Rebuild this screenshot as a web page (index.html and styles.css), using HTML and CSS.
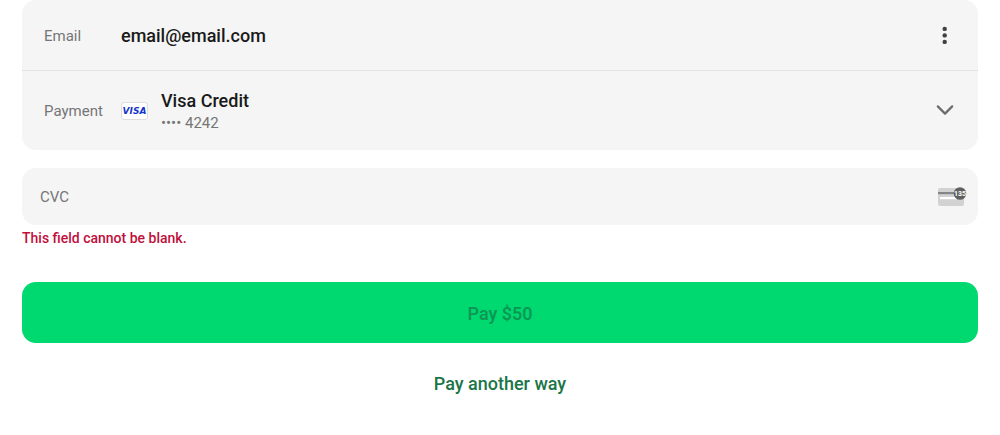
FILE: index.html
```html
<!DOCTYPE html>
<html lang="en">
<head>
<meta charset="utf-8">
<meta name="viewport" content="width=device-width, initial-scale=1">
<title>Payment</title>
<link rel="stylesheet" href="styles.css">
</head>
<body>
<form class="checkout">
  <section class="summary">
    <div class="row">
      <span class="row-label">Email</span>
      <span class="row-value">email@email.com</span>
      <button class="icon-button" type="button" aria-label="More options">
        <svg width="20" height="20" viewBox="0 0 20 20" fill="#414141">
          <circle cx="9.7" cy="2.9" r="2.2"/><circle cx="9.7" cy="9.4" r="2.2"/><circle cx="9.7" cy="15.9" r="2.2"/>
        </svg>
      </button>
    </div>
    <div class="row row-payment">
      <span class="row-label">Payment</span>
      <span class="brand">VISA</span>
      <div class="method">
        <span class="row-value">Visa Credit</span>
        <span class="digits">•••• 4242</span>
      </div>
      <button class="icon-button" type="button" aria-label="Change payment method">
        <svg width="20" height="20" viewBox="0 0 20 20" fill="none" stroke="#6b6b6b" stroke-width="2.2" stroke-linecap="round" stroke-linejoin="round">
          <path d="M2.8 5.4 10 12.6 17.2 5.4"/>
        </svg>
      </button>
    </div>
  </section>

  <div class="field">
    <input class="field-input" id="cvc" type="text" inputmode="numeric" placeholder="CVC" aria-label="CVC" aria-describedby="cvc-error">
    <svg class="cvc-icon" width="30" height="20" viewBox="0 0 30 20" aria-hidden="true">
      <rect x="1" y="1" width="26" height="18" rx="2" fill="#d2d2d2"/>
      <rect x="1" y="5" width="26" height="2.2" fill="#858585"/>
      <rect x="3" y="10" width="22" height="2.2" fill="#fff"/>
      <circle cx="23" cy="6.5" r="6.3" fill="#606060"/>
      <text class="cvc-digits" x="23" y="9" text-anchor="middle">135</text>
    </svg>
  </div>
  <p class="error" id="cvc-error">This field cannot be blank.</p>

  <button class="pay" type="submit" disabled>Pay $50</button>
  <a class="alternative" href="#">Pay another way</a>
</form>
</body>
</html>
```

FILE: styles.css
```css
* {
  box-sizing: border-box;
}

body {
  margin: 0;
  background: #fff;
  color: #1a1a1a;
  font-family: Roboto, "Liberation Sans", sans-serif;
}

.checkout {
  display: flex;
  flex-direction: column;
  padding: 0 22px 40px;
}

.summary {
  border-radius: 14px;
  background: #f5f5f5;
}

.row {
  display: flex;
  align-items: center;
  min-height: 70px;
  padding: 2px 23px 0 22px;
}

.row-payment {
  min-height: 80px;
  padding-top: 0;
  border-top: 1px solid #e3e3e3;
}

.row-label {
  flex: 0 0 77px;
  color: #757575;
  font-size: 15px;
  line-height: 20px;
}

.row-value {
  font-size: 18px;
  font-weight: 500;
  line-height: 22px;
}

.brand {
  width: 27px;
  margin-right: 13px;
  border: 1px solid #dedede;
  border-radius: 3px;
  background: #fff;
  color: #1434cb;
  font-family: "DejaVu Sans", sans-serif;
  font-size: 9px;
  font-style: italic;
  font-weight: 700;
  line-height: 16px;
  text-align: center;
}

.method {
  display: flex;
  flex-direction: column;
  padding-top: 2px;
}

.digits {
  color: #757575;
  font-size: 15px;
  line-height: 22px;
}

.icon-button {
  display: flex;
  margin-left: auto;
  padding: 0;
  border: 0;
  background: none;
}

.field {
  display: flex;
  align-items: center;
  margin-top: 18px;
  padding-right: 11px;
  border-radius: 14px;
  background: #f5f5f5;
}

.field-input {
  flex: 1;
  min-width: 0;
  height: 57px;
  padding: 0 18px;
  border: 0;
  background: none;
  color: inherit;
  font: 15px Roboto, "Liberation Sans", sans-serif;
}

.field-input::placeholder {
  color: #757575;
}

.cvc-digits {
  fill: #fff;
  font: 700 7px Roboto, sans-serif;
}

.error {
  margin: 4px 0 0;
  color: #bf0f3c;
  font-size: 14px;
  font-weight: 500;
  line-height: 18px;
}

.pay {
  min-height: 61px;
  margin-top: 35px;
  padding: 2px 16px 0;
  border: 0;
  border-radius: 14px;
  background: #00d870;
  color: #0c9553;
  font: 500 18px Roboto, "Liberation Sans", sans-serif;
}

.alternative {
  align-self: center;
  margin-top: 30px;
  color: #1a7547;
  font-size: 18px;
  font-weight: 500;
  line-height: 22px;
  text-decoration: none;
}
```
